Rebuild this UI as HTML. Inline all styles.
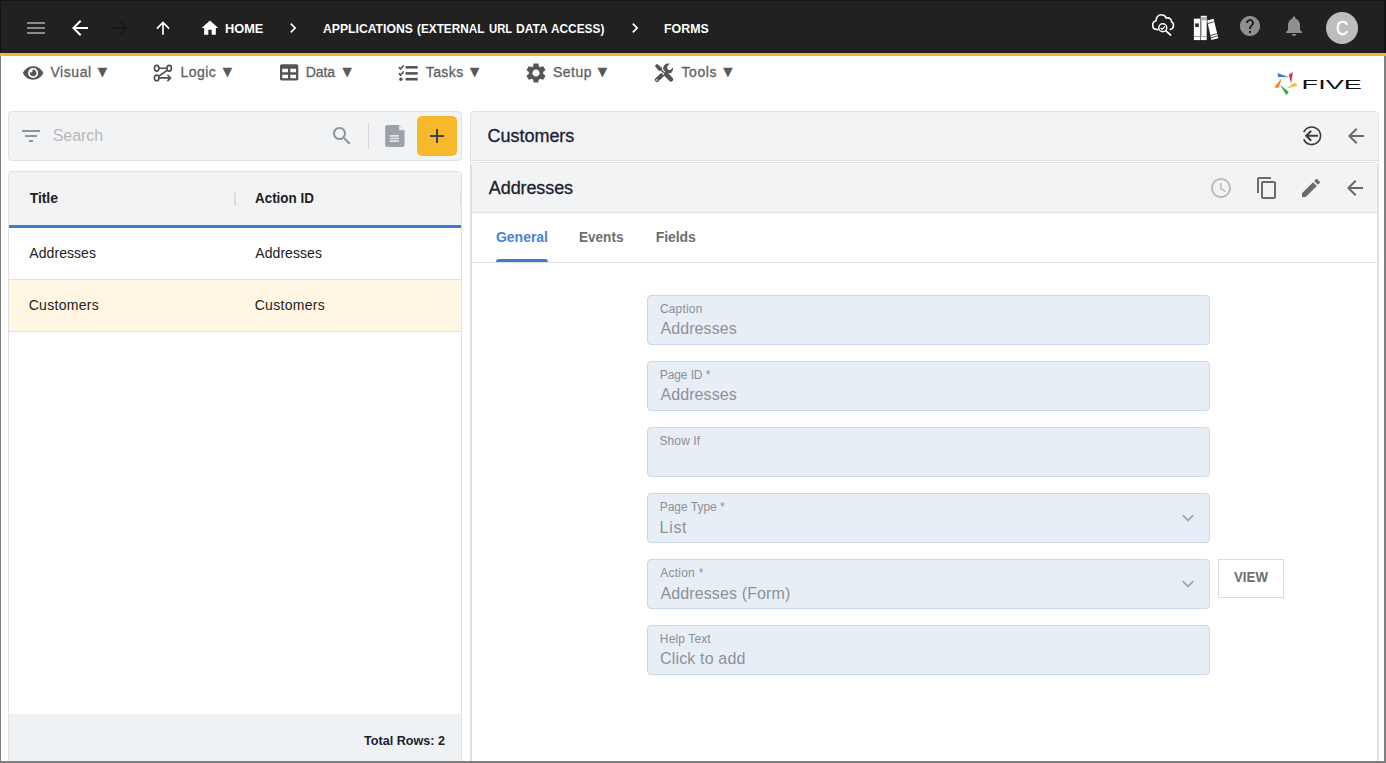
<!DOCTYPE html>
<html lang="en">
<head>
<meta charset="utf-8">
<title>Five - Forms</title>
<style>
*{box-sizing:border-box;margin:0;padding:0}
html,body{width:1386px;height:763px;overflow:hidden;background:#fff}
body{font-family:"Liberation Sans",sans-serif;position:relative;color:#212121}
.a{position:absolute}
.t{position:absolute;white-space:nowrap;line-height:1}
.med{-webkit-text-stroke:0.3px currentColor}
svg{position:absolute;display:block;overflow:visible}
.panel{background:#f2f3f5;border:1px solid #e0e0e1;border-radius:4px}
.fld{left:647px;width:563px;height:50px;background:#e8eef6;border:1px solid #cad9ea;border-radius:4px}
</style>
</head>
<body>
<!-- ===== TOP BAR ===== -->
<div class="a" style="left:0;top:0;width:1386px;height:53px;background:#212121"></div>
<div class="a" style="left:0;top:53px;width:1386px;height:3px;background:#f5b62b"></div>
<!-- hamburger -->
<svg style="left:24px;top:16px" width="24" height="24" viewBox="0 0 24 24"><path fill="#8a8a8a" d="M3 18h18v-2H3v2zm0-5h18v-2H3v2zm0-7v2h18V6H3z"/></svg>
<!-- back -->
<svg style="left:68px;top:16px" width="24" height="24" viewBox="0 0 24 24"><path fill="#fff" d="M20 11H7.830l5.590-5.590L12 4l-8 8 8 8 1.410-1.410L7.830 13H20v-2z"/></svg>
<!-- forward (disabled) -->
<svg style="left:108px;top:16px" width="24" height="24" viewBox="0 0 24 24"><path fill="#181818" d="M12 4l-1.410 1.410L16.170 11H4v2h12.170l-5.580 5.590L12 20l8-8z"/></svg>
<!-- up -->
<svg style="left:153px;top:18px" width="20" height="20" viewBox="0 0 24 24"><path fill="#fff" d="M4 12l1.410 1.410L11 7.830V20h2V7.830l5.580 5.590L20 12l-8-8-8 8z"/></svg>
<!-- home -->
<svg style="left:200px;top:18px" width="20" height="20" viewBox="0 0 24 24"><path fill="#fff" d="M10 20v-6h4v6h5v-8h3L12 3 2 12h3v8z"/></svg>
<!-- chevrons -->
<svg style="left:283px;top:18px" width="20" height="20" viewBox="0 0 24 24"><path fill="#fff" d="M10 6L8.590 7.410 13.170 12l-4.580 4.590L10 18l6-6z"/></svg>
<svg style="left:625px;top:18px" width="20" height="20" viewBox="0 0 24 24"><path fill="#fff" d="M10 6L8.590 7.410 13.170 12l-4.580 4.590L10 18l6-6z"/></svg>
<!-- cloud search -->
<svg style="left:1150px;top:12px" width="28" height="26" viewBox="0 0 28 26">
  <path d="M7.800 17.600 C4.600 17.600 2.700 15.600 2.700 13.200 C2.700 10.900 4.200 9.200 6.000 8.800 C6.000 5.400 8.300 2.800 11.300 2.800 C13.600 2.800 15.400 4.100 16.300 6.100 C19.200 5.200 21.600 7.200 21.600 9.800 C22.800 10.500 23.500 11.800 23.500 13.200 C23.500 15.300 22.300 16.900 20.200 17.600" fill="none" stroke="#fff" stroke-width="1.600" stroke-linecap="round"/>
  <circle cx="12.750" cy="15.750" r="4.000" fill="#212121" stroke="#fff" stroke-width="1.500"/>
  <path d="M10.700 15.900l1.500 1.450 2.700-3.000" fill="none" stroke="#fff" stroke-width="1.400"/>
  <path d="M15.900 18.900l4.700 4.100" stroke="#fff" stroke-width="1.700" stroke-linecap="round"/>
</svg>
<!-- books -->
<svg style="left:1190px;top:12px" width="32" height="30" viewBox="0 0 32 30">
  <rect x="3.900" y="6.700" width="6.300" height="21.400" fill="#fff"/>
  <rect x="5.200" y="11.400" width="3.600" height="3.600" fill="#2a2a2a"/>
  <rect x="3.900" y="23.900" width="6.300" height="1.200" fill="#aaa"/>
  <rect x="10.800" y="3.800" width="5.900" height="24.300" fill="#fff"/>
  <rect x="10.800" y="4.900" width="5.900" height="3.600" fill="#b3b3b3"/>
  <rect x="10.800" y="8.500" width="1.100" height="15.400" fill="#b3b3b3"/>
  <rect x="10.800" y="23.900" width="5.900" height="1.200" fill="#aaa"/>
  <polygon points="17.10,8.50 23.60,6.70 28.30,26.20 21.40,28.10" fill="#fff"/>
  <polygon points="17.66,11.05 24.21,9.23 24.42,10.11 17.85,11.93" fill="#444"/>
  <polygon points="20.28,23.00 27.08,21.13 27.29,22.01 20.48,23.89" fill="#444"/>
  <polygon points="20.80,25.36 27.64,23.47 27.85,24.35 20.99,26.24" fill="#444"/>
</svg>
<!-- help -->
<svg style="left:1238px;top:14px" width="24" height="24" viewBox="0 0 24 24"><path fill="#8f8f8f" d="M12 2C6.480 2 2 6.480 2 12s4.480 10 10 10 10-4.480 10-10S17.520 2 12 2zm1 17h-2v-2h2v2zm2.070-7.750l-.9.920C13.450 12.900 13 13.500 13 15h-2v-.5c0-1.100.45-2.100 1.170-2.830l1.240-1.260c.37-.36.590-.86.590-1.410 0-1.100-.9-2-2-2s-2 .9-2 2H8c0-2.210 1.790-4 4-4s4 1.790 4 4c0 .88-.36 1.680-.93 2.250z"/></svg>
<!-- bell -->
<svg style="left:1282px;top:14px" width="24" height="24" viewBox="0 0 24 24"><path fill="#8f8f8f" d="M12 22c1.100 0 2-.9 2-2h-4c0 1.100.89 2 2 2zm6-6v-5c0-3.070-1.640-5.640-4.500-6.320V4c0-.83-.67-1.500-1.500-1.500s-1.500.67-1.500 1.500v.68C7.630 5.360 6 7.920 6 11v5l-2 2v1h16v-1l-2-2z"/></svg>
<!-- avatar -->
<div class="a" style="left:1326px;top:12px;width:32px;height:32px;border-radius:50%;background:#bdbdbd"></div>
<!-- ===== MENU BAR ===== -->
<!-- eye (Visual) -->
<svg style="left:22.900px;top:63.700px" width="20.250" height="18" viewBox="0 0 576 512"><path fill="#555" d="M572.520 241.400C518.290 135.590 410.930 64 288 64S57.680 135.640 3.480 241.410a32.350 32.350 0 0 0 0 29.190C57.710 376.410 165.070 448 288 448s230.320-71.640 284.520-177.410a32.350 32.350 0 0 0 0-29.190zM288 400a144 144 0 1 1 144-144 143.930 143.930 0 0 1-144 144zm0-240a95.310 95.310 0 0 0-25.310 3.790 47.850 47.850 0 0 1-66.900 66.900A95.780 95.780 0 1 0 288 160z"/></svg>
<!-- logic -->
<svg style="left:148px;top:58px" width="30" height="30" viewBox="0 0 30 30" fill="none" stroke="#505050" stroke-width="1.650">
  <ellipse cx="8.700" cy="10.200" rx="2.250" ry="2.850"/>
  <ellipse cx="21.200" cy="10.200" rx="2.250" ry="2.850"/>
  <ellipse cx="8.700" cy="19.900" rx="2.250" ry="2.850"/>
  <path d="M11 10.200H19M19.300 12.200L10.800 18.100M11 19.900H22.300M19.400 16.700L22.500 19.900L19.400 23.100"/>
</svg>
<!-- table (Data) -->
<svg style="left:279.800px;top:63.350px" width="18.300" height="18.700" viewBox="0 0 512 512" preserveAspectRatio="none"><path fill="#555" d="M464 32H48C21.490 32 0 53.490 0 80v352c0 26.510 21.490 48 48 48h416c26.510 0 48-21.490 48-48V80c0-26.510-21.490-48-48-48zM224 416H64v-96h160v96zm0-160H64v-96h160v96zm224 160H288v-96h160v96zm0-160H288v-96h160v96z"/></svg>
<!-- tasks -->
<svg style="left:393px;top:58px" width="30" height="30" viewBox="0 0 30 30">
  <g fill="#555"><rect x="12.600" y="8" width="12.100" height="2.600"/><rect x="12.600" y="14.100" width="12.100" height="2.600"/><rect x="12.600" y="19.900" width="12.100" height="2.600"/><circle cx="7.900" cy="21.200" r="1.750"/></g>
  <path d="M6.300 9.600l1.400 1.450 2.600-3.200M6.300 15.650l1.400 1.450 2.600-3.200" fill="none" stroke="#555" stroke-width="1.600" stroke-linecap="round" stroke-linejoin="round"/>
</svg>
<!-- gear (Setup) -->
<svg style="left:524.200px;top:61.100px" width="24" height="24" viewBox="0 0 24 24"><path fill="#555" d="M19.140 12.940c.04-.3.060-.61.060-.94 0-.32-.02-.64-.07-.94l2.030-1.580c.18-.14.230-.41.120-.61l-1.920-3.320c-.12-.22-.37-.29-.59-.22l-2.390.96c-.5-.38-1.030-.7-1.620-.94l-.36-2.540c-.04-.24-.24-.41-.48-.41h-3.840c-.24 0-.43.170-.47.410l-.36 2.540c-.59.240-1.130.57-1.620.94l-2.390-.96c-.22-.08-.47 0-.59.220L2.740 8.870c-.12.210-.08.470.12.610l2.030 1.580c-.05.300-.09.630-.09.940s.02.640.07.940l-2.030 1.580c-.18.140-.23.410-.12.610l1.920 3.320c.12.220.37.290.59.220l2.390-.96c.5.380 1.030.7 1.620.94l.36 2.540c.05.240.24.410.48.410h3.840c.24 0 .44-.17.470-.41l.36-2.540c.59-.24 1.130-.56 1.620-.94l2.390.96c.22.080.47 0 .59-.22l1.920-3.320c.12-.22.070-.47-.12-.61l-2.010-1.580zM12 15.600c-1.980 0-3.600-1.620-3.600-3.600s1.620-3.600 3.600-3.600 3.600 1.620 3.600 3.600-1.620 3.600-3.600 3.600z"/></svg>
<!-- tools -->
<svg style="left:648px;top:58px" width="30" height="30" viewBox="0 0 30 30">
  <!-- wrench -->
  <path d="M17.300 14.000L8.900 21.900" stroke="#555" stroke-width="4.300" stroke-linecap="round"/>
  <circle cx="20.100" cy="10.600" r="5.000" fill="#555"/>
  <path d="M21.500 9.500L27.500 3.500" stroke="#fff" stroke-width="4.800" stroke-linecap="round"/>
  <circle cx="8.900" cy="21.900" r="0.850" fill="#d8d8d8"/>
  <!-- screwdriver (white halo) -->
  <path d="M12 11L24 23" stroke="#fff" stroke-width="3.600"/>
  <path d="M8.900 5.800L13.900 9.700L14.300 11.700L10.800 13L6.900 8Z" fill="#555"/>
  <path d="M12.500 11.500L18 16.500" stroke="#555" stroke-width="1.500"/>
  <path d="M18.000 16.300L23.000 21.400" stroke="#555" stroke-width="4.500" stroke-linecap="round"/>
</svg>
<!-- FIVE logo -->
<svg style="left:1265px;top:62px" width="110" height="44" viewBox="0 0 110 44">
  <polygon points="12.700,11 23.800,15.200 13.100,15.100" fill="#3b78d8"/>
  <polygon points="27.800,9.900 23.800,12.700 26.200,21.400" fill="#e0323c"/>
  <polygon points="29.800,20.800 32.900,23.400 21.400,26.600" fill="#f6b32c"/>
  <polygon points="15.100,23 23.800,29.800 21.400,33.300" fill="#3aa550"/>
  <polygon points="16.700,15.900 13.900,25.800 9.100,25.400" fill="#f5852a"/>
  <text x="36.600" y="27.200" font-family="Liberation Sans, sans-serif" font-size="13.400" fill="#111" textLength="60.200" lengthAdjust="spacingAndGlyphs">FIVE</text>
</svg>
<!-- ===== LEFT: search ===== -->
<div class="a panel" style="left:8px;top:111px;width:454px;height:50px"></div>
<svg style="left:19px;top:124px" width="24" height="24" viewBox="0 0 24 24"><path fill="#8d949c" d="M10 18h4v-2h-4v2zM3 6v2h18V6H3zm3 7h12v-2H6v2z"/></svg>
<svg style="left:330px;top:124px" width="24" height="24" viewBox="0 0 24 24"><path fill="#8d949c" d="M15.500 14h-.79l-.28-.27C15.410 12.590 16 11.110 16 9.500 16 5.910 13.090 3 9.500 3S3 5.910 3 9.500 5.910 16 9.500 16c1.610 0 3.090-.59 4.230-1.570l.27.280v.79l5 4.990L20.490 19l-4.990-5zm-6 0C7.010 14 5 11.990 5 9.500S7.010 5 9.500 5 14 7.010 14 9.500 11.990 14 9.500 14z"/></svg>
<div class="a" style="left:368px;top:122px;width:1px;height:28px;background:#d6d7da"></div>
<!-- document icon -->
<svg style="left:383px;top:122px" width="24" height="28" viewBox="0 0 24 28">
  <path d="M4.700 3H16.200L21.500 8.300V22.600a2.500 2.500 0 0 1-2.500 2.500H4.700a2.500 2.500 0 0 1-2.500-2.500V5.500A2.500 2.500 0 0 1 4.700 3z" fill="#9aa1a9"/>
  <path d="M16.200 3V8.300H21.500Z" fill="#e9ebee"/>
  <path d="M6.800 13.900H16M6.800 16.500H16M6.800 19.100H16" stroke="#e3e6e9" stroke-width="1.600"/>
</svg>
<!-- plus button -->
<div class="a" style="left:417px;top:116px;width:40px;height:40px;background:#f7b82c;border-radius:5px"></div>
<svg style="left:425px;top:124px" width="24" height="24" viewBox="0 0 24 24"><path fill="#3a4150" d="M19 13h-6v6h-2v-6H5v-2h6V5h2v6h6v2z"/></svg>

<!-- ===== LEFT: table ===== -->
<div class="a" style="left:8px;top:171px;width:454px;height:600px;background:#fff;border:1px solid #e0e0e1;border-radius:4px"></div>
<div class="a" style="left:9px;top:172px;width:452px;height:53px;background:#f2f3f5;border-radius:3px 3px 0 0"></div>
<div class="a" style="left:9px;top:225px;width:452px;height:3px;background:#3b7dd4"></div>
<div class="a" style="left:234px;top:192px;width:2px;height:14px;background:#dedfe1"></div>
<div class="a" style="left:460px;top:192px;width:1px;height:14px;background:#dedfe1"></div>
<div class="a" style="left:9px;top:279px;width:452px;height:1px;background:#e2e2e2"></div>
<div class="a" style="left:9px;top:280px;width:452px;height:51px;background:#fff6e4"></div>
<div class="a" style="left:9px;top:331px;width:452px;height:1px;background:#e2e2e2"></div>
<div class="a" style="left:9px;top:714px;width:452px;height:49px;background:#eef2f4"></div>

<!-- ===== RIGHT: Customers panel ===== -->
<div class="a" style="left:470px;top:111px;width:909px;height:700px;background:#fff;border:1px solid #e0e0e1;border-radius:4px"></div>
<div class="a" style="left:471px;top:112px;width:907px;height:48px;background:#f2f3f5;border-radius:3px 3px 0 0"></div>
<div class="a" style="left:471px;top:160px;width:907px;height:1px;background:#e0e0e1"></div>
<!-- circle arrow -->
<svg style="left:1300px;top:124px" width="24" height="24" viewBox="0 0 24 24" fill="none" stroke="#3c3c3c">
  <path d="M3.710 8.220A8.800 8.800 0 1 1 3.710 15.380" stroke-width="1.600"/>
  <path d="M18 11.800H6.400M11.200 6.900L6.200 11.800L11.200 16.700" stroke-width="2"/>
</svg>
<svg style="left:1344.400px;top:124px" width="24" height="24" viewBox="0 0 24 24"><path fill="#686868" d="M20 11H7.830l5.590-5.590L12 4l-8 8 8 8 1.410-1.410L7.830 13H20v-2z"/></svg>

<!-- ===== RIGHT: Addresses sub-panel ===== -->
<div class="a" style="left:471px;top:162px;width:907px;height:700px;background:#fff;border:1px solid #e0e0e1;border-radius:4px 4px 0 0"></div>
<div class="a" style="left:472px;top:163px;width:905px;height:49px;background:linear-gradient(#fafbfb 0,#fafbfb 1px,#f2f3f5 1px);border-radius:3px 3px 0 0"></div>
<div class="a" style="left:472px;top:212px;width:905px;height:1px;background:#e0e0e1"></div>
<svg style="left:1209px;top:176px" width="24" height="24" viewBox="0 0 24 24"><path fill="#bcbcbc" d="M11.990 2C6.470 2 2 6.480 2 12s4.470 10 9.990 10C17.520 22 22 17.520 22 12S17.520 2 11.990 2zM12 20c-4.420 0-8-3.580-8-8s3.580-8 8-8 8 3.580 8 8-3.580 8-8 8zm.5-13H11v6l5.250 3.150.75-1.230-4.500-2.670z"/></svg>
<svg style="left:1255px;top:176px" width="24" height="24" viewBox="0 0 24 24"><path fill="#6b6b6b" d="M16 1H4c-1.100 0-2 .9-2 2v14h2V3h12V1zm3 4H8c-1.100 0-2 .9-2 2v14c0 1.100.9 2 2 2h11c1.100 0 2-.9 2-2V7c0-1.100-.9-2-2-2zm0 16H8V7h11v14z"/></svg>
<svg style="left:1299px;top:175.700px" width="24" height="24" viewBox="0 0 24 24"><path fill="#6b6b6b" d="M3 17.250V21h3.750L17.810 9.940l-3.750-3.750L3 17.250zM20.710 7.040c.39-.39.39-1.020 0-1.410l-2.340-2.340c-.39-.39-1.020-.39-1.410 0l-1.830 1.830 3.750 3.750 1.830-1.830z"/></svg>
<svg style="left:1343px;top:176px" width="24" height="24" viewBox="0 0 24 24"><path fill="#686868" d="M20 11H7.830l5.590-5.590L12 4l-8 8 8 8 1.410-1.410L7.830 13H20v-2z"/></svg>

<!-- tabs -->
<div class="a" style="left:496px;top:259px;width:52px;height:3px;background:#3b7dd4;border-radius:3px 3px 0 0"></div>
<div class="a" style="left:472px;top:262px;width:905px;height:1px;background:#e0e0e1"></div>

<!-- fields -->
<div class="a fld" style="top:295px"></div>
<div class="a fld" style="top:361px"></div>
<div class="a fld" style="top:427px"></div>
<div class="a fld" style="top:493px"></div>
<div class="a fld" style="top:559px"></div>
<div class="a fld" style="top:625px"></div>
<svg style="left:1176px;top:506px" width="24" height="24" viewBox="0 0 24 24"><path d="M6.700 9.200L12 14.500L17.300 9.200" fill="none" stroke="#a0a5ac" stroke-width="1.900"/></svg>
<svg style="left:1176px;top:572px" width="24" height="24" viewBox="0 0 24 24"><path d="M6.700 9.200L12 14.500L17.300 9.200" fill="none" stroke="#a0a5ac" stroke-width="1.900"/></svg>
<div class="a" style="left:1218px;top:559px;width:66px;height:39px;border:1px solid #dadada;background:#fff"></div>

<div id="t_home" class="t" style="left:224.85px;top:22.20px;font-size:13px;font-weight:bold;color:#fff;transform:scaleX(0.9844);transform-origin:0 0;">HOME</div>
<div id="t_apps1" class="t" style="left:322.89px;top:22.20px;font-size:13px;font-weight:bold;color:#fff;transform:scaleX(0.9377);transform-origin:0 0;">APPLICATIONS</div>
<div id="t_apps2" class="t" style="left:417.10px;top:22.20px;font-size:13px;font-weight:bold;color:#fff;transform:scaleX(0.9059);transform-origin:0 0;">(EXTERNAL</div>
<div id="t_apps3" class="t" style="left:489.06px;top:22.20px;font-size:13px;font-weight:bold;color:#fff;transform:scaleX(0.8683);transform-origin:0 0;">URL</div>
<div id="t_apps4" class="t" style="left:515.93px;top:22.20px;font-size:13px;font-weight:bold;color:#fff;transform:scaleX(0.9288);transform-origin:0 0;">DATA</div>
<div id="t_apps5" class="t" style="left:551.22px;top:22.20px;font-size:13px;font-weight:bold;color:#fff;transform:scaleX(0.9119);transform-origin:0 0;">ACCESS)</div>
<div id="t_forms" class="t" style="left:664.34px;top:22.20px;font-size:13px;font-weight:bold;color:#fff;transform:scaleX(0.9523);transform-origin:0 0;">FORMS</div>
<div id="m_visual" class="t med" style="left:50.43px;top:65.25px;font-size:14px;color:#5f5f5f;letter-spacing:0.557px;">Visual</div>
<div id="m_logic" class="t med" style="left:180.49px;top:65.25px;font-size:14px;color:#5f5f5f;letter-spacing:0.473px;">Logic</div>
<div id="m_data" class="t med" style="left:305.76px;top:65.25px;font-size:14px;color:#5f5f5f;letter-spacing:-0.111px;">Data</div>
<div id="m_tasks" class="t med" style="left:425.73px;top:65.25px;font-size:14px;color:#5f5f5f;letter-spacing:0.424px;">Tasks</div>
<div id="m_setup" class="t med" style="left:553.02px;top:65.25px;font-size:14px;color:#5f5f5f;letter-spacing:0.455px;">Setup</div>
<div id="m_tools" class="t med" style="left:681.43px;top:65.25px;font-size:14px;color:#5f5f5f;letter-spacing:0.585px;">Tools</div>
<div id="s_search" class="t" style="left:52.66px;top:128.46px;font-size:16px;color:#b5b8bc;letter-spacing:-0.045px;">Search</div>
<div id="h_title" class="t" style="left:29.68px;top:191.25px;font-size:14px;font-weight:bold;color:#212121;letter-spacing:-0.067px;">Title</div>
<div id="h_action" class="t" style="left:255.45px;top:191.25px;font-size:14px;font-weight:bold;color:#212121;transform:scaleX(0.9579);transform-origin:0 0;">Action ID</div>
<div id="r1a" class="t" style="left:29.36px;top:246.05px;font-size:14px;color:#212121;letter-spacing:0.057px;">Addresses</div>
<div id="r1b" class="t" style="left:255.36px;top:246.05px;font-size:14px;color:#212121;letter-spacing:0.048px;">Addresses</div>
<div id="r2a" class="t" style="left:28.67px;top:297.95px;font-size:14px;color:#212121;letter-spacing:0.304px;">Customers</div>
<div id="r2b" class="t" style="left:254.67px;top:297.95px;font-size:14px;color:#212121;letter-spacing:0.297px;">Customers</div>
<div id="total" class="t" style="left:364.38px;top:733.60px;font-size:13px;font-weight:bold;color:#1b2130;transform:scaleX(0.9694);transform-origin:0 0;">Total Rows: 2</div>
<div id="p_cust" class="t med" style="left:487.48px;top:127.46px;font-size:18px;color:#1b2130;letter-spacing:-0.018px;">Customers</div>
<div id="p_addr" class="t med" style="left:488.85px;top:178.66px;font-size:18px;color:#1b2130;letter-spacing:-0.102px;">Addresses</div>
<div id="tab_g" class="t" style="left:495.96px;top:229.95px;font-size:14px;font-weight:bold;color:#4285d9;letter-spacing:-0.018px;">General</div>
<div id="tab_e" class="t" style="left:579.09px;top:229.95px;font-size:14px;font-weight:bold;color:#6e6e6e;transform:scaleX(0.9678);transform-origin:0 0;">Events</div>
<div id="tab_f" class="t" style="left:655.72px;top:229.95px;font-size:14px;font-weight:bold;color:#6e6e6e;letter-spacing:-0.102px;">Fields</div>
<div id="l1" class="t" style="left:659.88px;top:302.54px;font-size:12px;color:#8a9098;letter-spacing:0.181px;">Caption</div>
<div id="l2" class="t" style="left:659.85px;top:368.54px;font-size:12px;color:#8a9098;letter-spacing:-0.111px;">Page ID *</div>
<div id="l3" class="t" style="left:659.52px;top:434.54px;font-size:12px;color:#8a9098;letter-spacing:0.086px;">Show If</div>
<div id="l4" class="t" style="left:659.73px;top:500.54px;font-size:12px;color:#8a9098;letter-spacing:-0.013px;">Page Type *</div>
<div id="l5" class="t" style="left:660.16px;top:566.54px;font-size:12px;color:#8a9098;letter-spacing:0.255px;">Action *</div>
<div id="l6" class="t" style="left:659.85px;top:632.54px;font-size:12px;color:#8a9098;letter-spacing:0.130px;">Help Text</div>
<div id="v1" class="t" style="left:660.42px;top:320.56px;font-size:16px;color:#8c9299;letter-spacing:0.102px;">Addresses</div>
<div id="v2" class="t" style="left:660.42px;top:386.56px;font-size:16px;color:#8c9299;letter-spacing:0.102px;">Addresses</div>
<div id="v4" class="t" style="left:659.58px;top:520.26px;font-size:16px;color:#8c9299;letter-spacing:0.685px;">List</div>
<div id="v5" class="t" style="left:660.42px;top:586.26px;font-size:16px;color:#8c9299;letter-spacing:0.123px;">Addresses (Form)</div>
<div id="v6" class="t" style="left:660.10px;top:651.36px;font-size:16px;color:#8c9299;letter-spacing:0.151px;">Click to add</div>
<div id="view" class="t" style="left:1233.88px;top:569.85px;font-size:14px;font-weight:bold;color:#6e6e6e;transform:scaleX(0.9480);transform-origin:0 0;">VIEW</div>
<div id="avc" class="t" style="left:1335.99px;top:18.17px;font-size:20px;color:#fff;transform:scaleX(0.86);transform-origin:0 0;-webkit-text-stroke:0.35px currentColor;">C</div>
<div id="tr1" class="t" style="left:97.55px;top:65.60px;font-size:12.7px;color:#5a5a5a;font-family:'DejaVu Sans',sans-serif;">▼</div>
<div id="tr2" class="t" style="left:222.40px;top:65.60px;font-size:12.7px;color:#5a5a5a;font-family:'DejaVu Sans',sans-serif;">▼</div>
<div id="tr3" class="t" style="left:342.21px;top:65.60px;font-size:12.7px;color:#5a5a5a;font-family:'DejaVu Sans',sans-serif;">▼</div>
<div id="tr4" class="t" style="left:469.67px;top:65.60px;font-size:12.7px;color:#5a5a5a;font-family:'DejaVu Sans',sans-serif;">▼</div>
<div id="tr5" class="t" style="left:597.40px;top:65.60px;font-size:12.7px;color:#5a5a5a;font-family:'DejaVu Sans',sans-serif;">▼</div>
<div id="tr6" class="t" style="left:722.99px;top:65.60px;font-size:12.7px;color:#5a5a5a;font-family:'DejaVu Sans',sans-serif;">▼</div>
<!-- window frame -->
<div class="a" style="left:0;top:0;width:1386px;height:1px;background:#141414"></div>
<div class="a" style="left:0;top:0;width:1px;height:53px;background:#141414"></div>
<div class="a" style="left:0;top:56px;width:1px;height:707px;background:#7d7d7d"></div>
<div class="a" style="left:1384px;top:0;width:2px;height:53px;background:#141414"></div>
<div class="a" style="left:1384px;top:56px;width:2px;height:707px;background:#808080"></div>
<div class="a" style="left:0;top:761px;width:1386px;height:2px;background:#7e7e7e"></div>

</body>
</html>
